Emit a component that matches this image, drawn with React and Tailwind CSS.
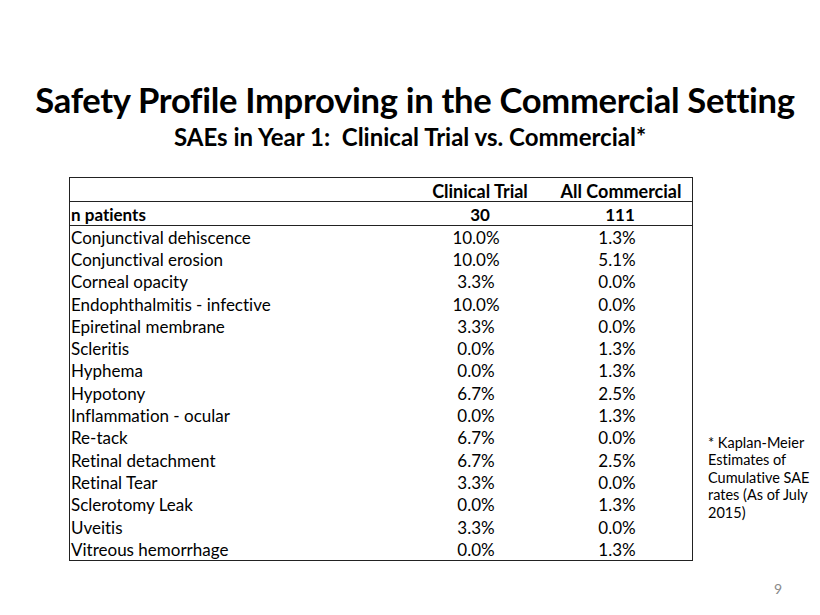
import React from 'react';

const ROWS = [
  ['Conjunctival dehiscence', '10.0%', '1.3%'],
  ['Conjunctival erosion', '10.0%', '5.1%'],
  ['Corneal opacity', '3.3%', '0.0%'],
  ['Endophthalmitis - infective', '10.0%', '0.0%'],
  ['Epiretinal membrane', '3.3%', '0.0%'],
  ['Scleritis', '0.0%', '1.3%'],
  ['Hyphema', '0.0%', '1.3%'],
  ['Hypotony', '6.7%', '2.5%'],
  ['Inflammation - ocular', '0.0%', '1.3%'],
  ['Re-tack', '6.7%', '0.0%'],
  ['Retinal detachment', '6.7%', '2.5%'],
  ['Retinal Tear', '3.3%', '0.0%'],
  ['Sclerotomy Leak', '0.0%', '1.3%'],
  ['Uveitis', '3.3%', '0.0%'],
  ['Vitreous hemorrhage', '0.0%', '1.3%'],
];

export default function App() {
  return (
    <div
      className="w-[820px] h-[615px] bg-white text-black flex flex-col overflow-hidden [font-variant-ligatures:none]"
      style={{ fontFamily: 'Lato, "Open Sans", sans-serif' }}
    >
      {/* Titles */}
      <div className="pt-[80px] flex flex-col items-center">
        <h1 className="ml-[10px] text-[34.6px] leading-[40px] font-bold tracking-[-0.3px]">
          Safety Profile Improving in the Commercial Setting
        </h1>
        <h2 className="mt-[2px] text-[24px] leading-[30px] font-bold whitespace-pre">
          SAEs in Year 1:  Clinical Trial vs. Commercial*
        </h2>
      </div>

      {/* Table + footnote */}
      <div className="mt-[25px] flex items-end">
        <div className="ml-[69px] w-[624px] border-[1.5px] border-[#222] text-[17px]">
          <div className="grid grid-cols-[340px_140px_1fr] h-[24px] items-center border-b border-[#222] font-bold text-[18px]">
            <div />
            <div className="text-center">Clinical Trial</div>
            <div className="text-center">All Commercial</div>
          </div>
          <div className="grid grid-cols-[340px_140px_1fr] h-[24px] items-center border-b border-[#222] font-bold">
            <div className="pl-[1px]">n patients</div>
            <div className="text-center">30</div>
            <div className="text-center pr-[2px]">111</div>
          </div>
          {ROWS.map(([name, trial, comm]) => (
            <div key={name} className="grid grid-cols-[340px_140px_1fr] h-[22.3px] items-center leading-none">
              <div className="pl-[1px]">{name}</div>
              <div className="text-center pr-[8px]">{trial}</div>
              <div className="text-center pr-[8px]">{comm}</div>
            </div>
          ))}
        </div>
        <div className="ml-[15px] mb-[40px] text-[14.5px] leading-[17.5px] whitespace-nowrap">
          * Kaplan-Meier<br />
          Estimates of<br />
          Cumulative SAE<br />
          rates (As of July<br />
          2015)
        </div>
      </div>

      <div className="mt-auto mb-[16px] ml-[774px] text-[14px] text-[#8a8a8a]">9</div>
    </div>
  );
}
